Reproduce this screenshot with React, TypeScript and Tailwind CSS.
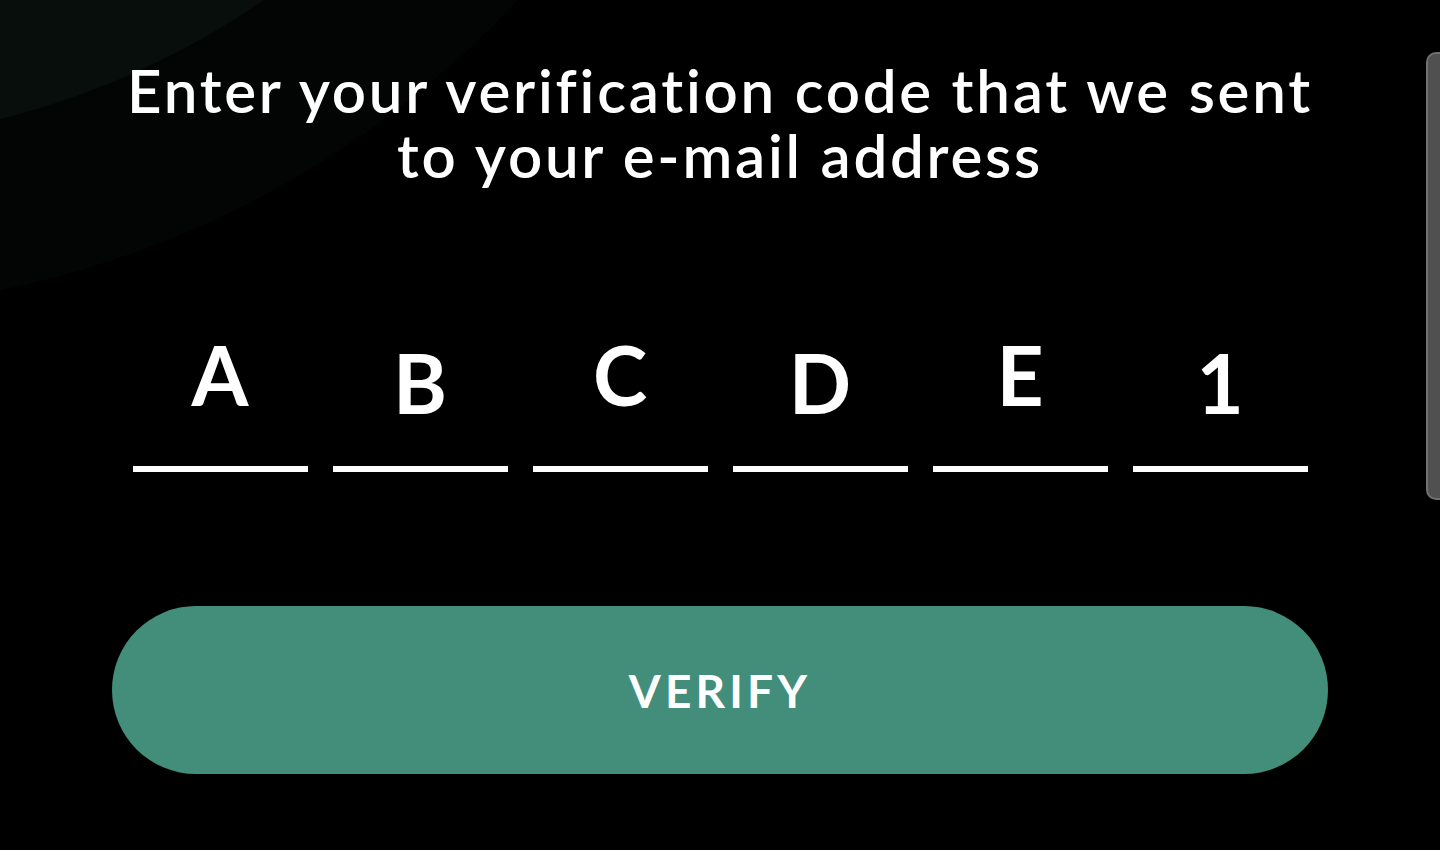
const code = [
  { ch: "A", pad: "pt-0" },
  { ch: "B", pad: "pt-[8px]" },
  { ch: "C", pad: "pt-0" },
  { ch: "D", pad: "pt-[8px]" },
  { ch: "E", pad: "pt-0" },
  { ch: "1", pad: "pt-[8px]" },
];

export default function App() {
  return (
    <div className="relative min-h-[850px] overflow-hidden bg-black font-['Lato',sans-serif] text-white">
      {/* soft background arcs, top left */}
      <div className="pointer-events-none absolute left-[-1170px] top-[-1640px] h-[1950px] w-[1950px] rounded-full bg-[#020504]" />
      <div className="pointer-events-none absolute left-[-1003px] top-[-1473px] h-[1616px] w-[1616px] rounded-full bg-[#070e0c]" />

      {/* scroll handle peeking from the right edge */}
      <div className="absolute right-0 top-[52px] h-[448px] w-[14px] rounded-l-[10px] border-2 border-r-0 border-[#707070] bg-[#505050]" />

      <main className="relative flex flex-col items-center pt-[58px]">
        <h1 className="text-center text-[60px] font-semibold leading-[65px] tracking-[0.046em] [font-variant-ligatures:none]">
          Enter your verification code that we sent
          <br />
          to your e-mail address
        </h1>

        <div className="mt-[144px] flex gap-[25px]">
          {code.map((c, i) => (
            <div key={i} className="flex w-[175px] flex-col items-center">
              <div className={`h-[134px] ${c.pad}`}>
                <span className="block text-[82px] font-bold leading-[84px]">{c.ch}</span>
              </div>
              <div className="h-[6px] w-full bg-white" />
            </div>
          ))}
        </div>

        <button className="mt-[134px] flex h-[168px] w-[1216px] items-center justify-center rounded-full bg-[#438e7a] text-[46px] font-bold tracking-[0.09em] text-white">
          VERIFY
        </button>
      </main>
    </div>
  );
}
